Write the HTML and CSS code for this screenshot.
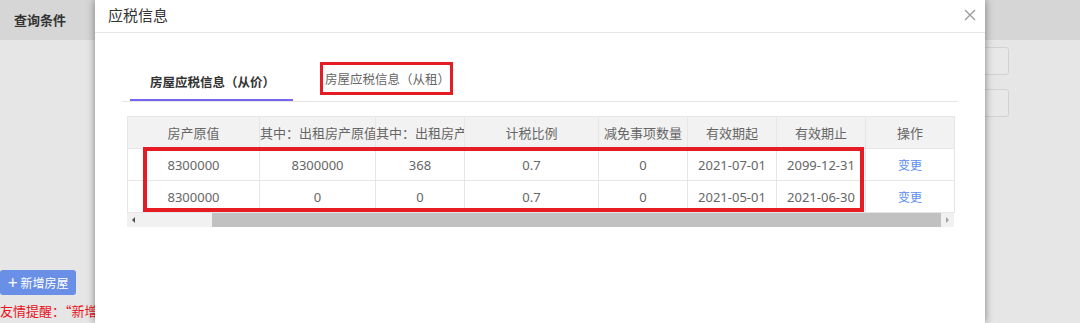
FILE: index.html
```html
<!DOCTYPE html>
<html lang="zh">
<head>
<meta charset="utf-8">
<link rel="stylesheet" href="styles.css">
</head>
<body>
<div class="page">
  <div class="topbar"><span class="topbar-title">查询条件</span></div>
  <div class="form">
    <div class="input"></div>
    <div class="input"></div>
  </div>
  <div class="actions">
    <button class="btn-add"><span class="plus">+</span>新增房屋</button>
    <div class="tip">友情提醒：“新增房屋”后请及时维护房屋应税信息，以免影响申报。</div>
  </div>
</div>

<div class="modal">
  <div class="modal-header">
    <span class="modal-title">应税信息</span>
    <span class="modal-close">
      <svg width="12" height="12" viewBox="0 0 12 12"><path d="M1 1L11 11M11 1L1 11" stroke="#9a9a9a" stroke-width="1.3" fill="none"/></svg>
    </span>
  </div>
  <div class="modal-body">
    <div class="tabs">
      <div class="tab active">房屋应税信息（从价）</div>
      <div class="tab"><span class="mark">房屋应税信息（从租）</span></div>
    </div>
    <div class="grid-wrap">
      <table class="grid">
        <colgroup>
          <col class="c1"><col class="c2"><col class="c3"><col class="c4">
          <col class="c5"><col class="c6"><col class="c7"><col class="c8">
        </colgroup>
        <thead>
          <tr>
            <th>房产原值</th>
            <th>其中：出租房产原值</th>
            <th>其中：出租房产面积</th>
            <th>计税比例</th>
            <th>减免事项数量</th>
            <th>有效期起</th>
            <th>有效期止</th>
            <th>操作</th>
          </tr>
        </thead>
        <tbody>
          <tr>
            <td>8300000</td><td>8300000</td><td>368</td><td>0.7</td><td>0</td><td>2021-07-01</td><td>2099-12-31</td><td><a class="link">变更</a></td>
          </tr>
          <tr>
            <td>8300000</td><td>0</td><td>0</td><td>0.7</td><td>0</td><td>2021-05-01</td><td>2021-06-30</td><td><a class="link">变更</a></td>
          </tr>
        </tbody>
      </table>
      <div class="hscroll">
        <span class="arrow left"></span>
        <span class="track"><span class="thumb"></span></span>
        <span class="arrow right"></span>
      </div>
      <div class="row-mark"></div>
    </div>
  </div>
</div>
</body>
</html>
```

FILE: styles.css
```css
html, body {
  margin: 0;
  padding: 0;
}
body {
  width: 1080px;
  height: 323px;
  overflow: hidden;
  position: relative;
  background: #e6e6e6;
  font-family: "Noto Sans", "Noto Sans CJK SC", sans-serif;
  color: #666;
}
.page {
  display: flex;
  flex-direction: column;
  height: 323px;
}
.topbar {
  height: 40px;
  background: #d6d6d6;
  display: flex;
  align-items: center;
  padding-left: 14px;
}
.topbar-title {
  font-family: "Noto Sans CJK SC", sans-serif;
  font-size: 13px;
  font-weight: 700;
  color: #333;
  margin-top: -2px;
}
.form {
  display: flex;
  flex-direction: column;
  align-items: flex-end;
  padding-right: 71px;
  padding-top: 7px;
  gap: 14px;
}
.input {
  width: 120px;
  height: 26px;
  border: 1px solid #d2d2d2;
  border-radius: 3px;
  background: #e8e8e8;
}
.actions {
  margin-top: auto;
  display: flex;
  flex-direction: column;
  align-items: flex-start;
  padding-bottom: 4px;
}
.btn-add {
  height: 25px;
  margin: 0;
  padding: 0 8px 0 8px;
  border: none;
  border-radius: 3px;
  background: #6a8fe6;
  color: #fff;
  font-family: "Noto Sans CJK SC", sans-serif;
  font-size: 12px;
  display: flex;
  align-items: center;
  gap: 3px;
}
.plus {
  font-size: 17px;
  line-height: 1;
  font-weight: 400;
  margin-top: -2px;
}
.tip {
  margin-top: 8px;
  font-family: "Noto Sans CJK SC", sans-serif;
  font-size: 13px;
  line-height: 16px;
  color: #e8141c;
  white-space: nowrap;
}

/* modal */
.modal {
  position: absolute;
  left: 95px;
  top: 0;
  width: 890px;
  height: 323px;
  background: #fff;
  box-shadow: 0 0 8px rgba(0, 0, 0, 0.45);
}
.modal-header {
  height: 33px;
  border-bottom: 1px solid #e6e6e6;
  display: flex;
  align-items: center;
  justify-content: space-between;
  padding: 0 9px 0 13px;
  box-sizing: border-box;
}
.modal-title {
  font-family: "Noto Sans CJK SC", sans-serif;
  font-size: 15px;
  color: #333;
  margin-top: -3px;
}
.modal-close {
  display: flex;
  margin-top: -3px;
}
.modal-body {
  padding: 30px 27px 0 27px;
}
.tabs {
  display: flex;
  border-bottom: 1px solid #e6e6e6;
  height: 38px;
  padding-left: 8px;
}
.tab {
  font-family: "Noto Sans CJK SC", sans-serif;
  font-size: 12.5px;
  color: #666;
  padding: 0 18px 0 20px;
  margin-right: 12px;
  height: 38px;
  line-height: 36px;
  box-sizing: border-box;
  display: flex;
  align-items: center;
}
.tab.active {
  font-weight: 700;
  color: #333;
  border-bottom: 2px solid #7466ee;
  padding-top: 2px;
}
.mark {
  display: inline-block;
  border: 3.5px solid #e51c23;
  padding: 0 0 0 2px;
  line-height: 27px;
  margin-left: -5px;
  margin-top: -8px;
}
.grid-wrap {
  position: relative;
  margin: 14px 4px 0 5px;
}
.grid {
  width: 827px;
  table-layout: fixed;
  border-collapse: collapse;
  font-size: 13px;
  color: #666;
}
.c1 { width: 132px; }
.c2 { width: 116px; }
.c3 { width: 89px; }
.c4 { width: 134px; }
.c5 { width: 89px; }
.c6 { width: 89px; }
.c7 { width: 89px; }
.c8 { width: 89px; }
.grid th, .grid td {
  border: 1px solid #e6e6e6;
  text-align: center;
  white-space: nowrap;
  overflow: hidden;
  padding: 0;
}
.grid th {
  font-family: "Noto Sans CJK SC", sans-serif;
  font-weight: 400;
  background: #f2f2f2;
  height: 31px;
  text-overflow: clip;
}
.grid td {
  height: 31px;
}
.link {
  font-family: "Noto Sans CJK SC", sans-serif;
  font-size: 12px;
  color: #5b8def;
}
.hscroll {
  display: flex;
  height: 14px;
  width: 827px;
  background: #f1f1f1;
}
.arrow {
  width: 13px;
  height: 14px;
  display: flex;
  align-items: center;
  justify-content: center;
}
.arrow.left::before {
  content: "";
  border-top: 3px solid transparent;
  border-bottom: 3px solid transparent;
  border-right: 3px solid #505050;
}
.arrow.right::before {
  content: "";
  border-top: 3px solid transparent;
  border-bottom: 3px solid transparent;
  border-left: 3px solid #a3a3a3;
}
.track {
  flex: 1;
  display: flex;
  padding-left: 72px;
}
.thumb {
  flex: 1;
  background: #c1c1c1;
}
.row-mark {
  position: absolute;
  left: 16px;
  top: 31px;
  width: 721px;
  height: 65px;
  border: 4px solid #e51c23;
  box-sizing: border-box;
  pointer-events: none;
}
```
